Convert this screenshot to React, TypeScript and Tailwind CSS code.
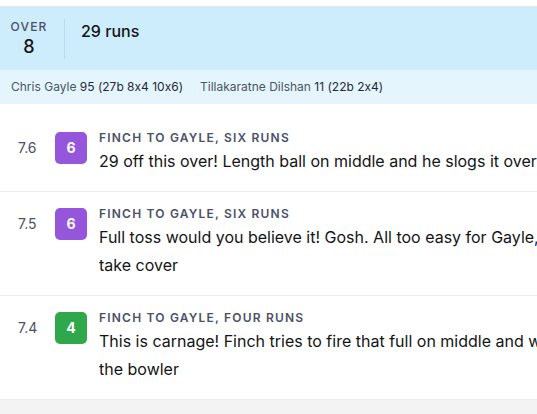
import React from "react";

type Ball = {
  over: string;
  runs: number;
  title: string;
  text: string;
};

const balls: Ball[] = [
  {
    over: "7.6",
    runs: 6,
    title: "Finch to Gayle, six runs",
    text: "29 off this over! Length ball on middle and he slogs it over cow corner.",
  },
  {
    over: "7.5",
    runs: 6,
    title: "Finch to Gayle, six runs",
    text: "Full toss would you believe it! Gosh. All too easy for Gayle, people in the stands take cover",
  },
  {
    over: "7.4",
    runs: 4,
    title: "Finch to Gayle, four runs",
    text: "This is carnage! Finch tries to fire that full on middle and whack, he drives it over the bowler",
  },
];

const badgeClass = (runs: number) =>
  runs === 6 ? "bg-[#9656dc]" : runs === 4 ? "bg-[#2ea84b]" : "bg-gray-400";

const BallRow: React.FC<{ ball: Ball }> = ({ ball }) => {
  const { over, runs, title, text } = ball;
  return (
    <li className="flex border-b border-[#ececec] py-4 pl-[18px] pr-4">
      <div className="flex h-8 w-[37px] shrink-0 items-center text-sm text-[#4a5068]">{over}</div>
      <div
        className={`flex h-8 w-8 shrink-0 items-center justify-center rounded-[5px] text-sm font-bold text-white ${badgeClass(runs)}`}
      >
        {runs}
      </div>
      <div className="ml-3 min-w-0 flex-1">
        <div className="mb-1 text-xs font-semibold uppercase leading-[11px] tracking-[0.1em] text-[#4a5068]">{title}</div>
        <p className="text-base leading-7 text-[#141414]">{text}</p>
      </div>
    </li>
  );
};

export default function App() {
  return (
    <div className="h-[414px] w-full overflow-hidden bg-[#f3f3f3] font-['Inter',sans-serif] [font-feature-settings:'calt'_0]">
      <div className="w-[743px] bg-white">
        <div className="h-[7px] border-b border-[#e6e6e6] bg-white" />

        <div className="flex h-[63px] items-center bg-[#cdecfc] pl-[9px]">
          <div className="flex h-10 w-[40px] flex-col items-center">
            <span className="text-xs font-medium uppercase leading-4 tracking-[0.1em] text-[#4a5068]">Over</span>
            <span className="text-lg font-medium leading-6 text-[#141414]">8</span>
          </div>
          <div className="ml-[15px] h-10 border-l border-[#b9dcef] pl-4">
            <span className="text-base font-medium leading-6 text-[#141414]">29 runs</span>
          </div>
        </div>

        <div className="flex h-[34px] items-center gap-[17px] bg-[#e5f5fd] px-[11px] text-xs text-[#4b5563]">
          <span>
            Chris Gayle <span className="text-[#1f2937]">95 (27b 8x4 10x6)</span>
          </span>
          <span>
            Tillakaratne Dilshan <span className="text-[#1f2937]">11 (22b 2x4)</span>
          </span>
        </div>

        <ul className="pt-3">
          {balls.map((ball) => (
            <BallRow key={ball.over} ball={ball} />
          ))}
        </ul>
      </div>
    </div>
  );
}
